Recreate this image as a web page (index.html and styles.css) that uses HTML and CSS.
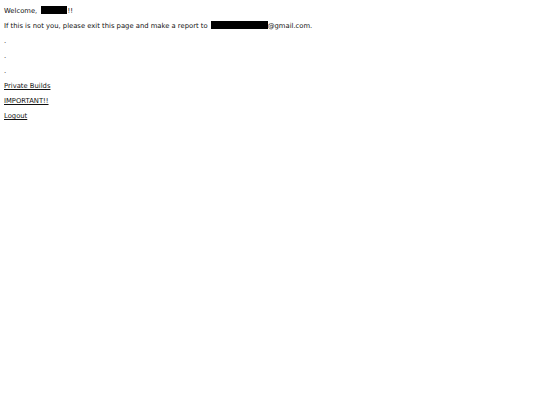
FILE: index.html
```html
<!DOCTYPE html>
<html>
<head>
<meta charset="utf-8">
<link rel="stylesheet" href="styles.css">
</head>
<body>
<div class="line">Welcome, <span class="redact r1"></span>!!</div>
<div class="line">If this is not you, please exit this page and make a report to <span class="redact r2"></span>@gmail.com.</div>
<div class="line">.</div>
<div class="line">.</div>
<div class="line">.</div>
<div class="line"><a href="#">Private Builds</a></div>
<div class="line"><a href="#">IMPORTANT!!</a></div>
<div class="line"><a href="#">Logout</a></div>
</body>
</html>
```
FILE: styles.css
```css
html, body { background: #fff; }
body {
  margin: 0;
  padding: 4px 4px;
  font-family: "DejaVu Sans", Verdana, sans-serif;
  font-size: 6.8px;
  color: #111;
}
.line {
  height: 15px;
  line-height: 15px;
  white-space: nowrap;
}
a { color: #111; text-decoration: underline; }
.redact {
  display: inline-block;
  background: #000;
  height: 8px;
  vertical-align: -1px;
}
.r1 { width: 26px; margin-left: 2px; }
.r2 { width: 57px; margin-left: 1px; }
```
